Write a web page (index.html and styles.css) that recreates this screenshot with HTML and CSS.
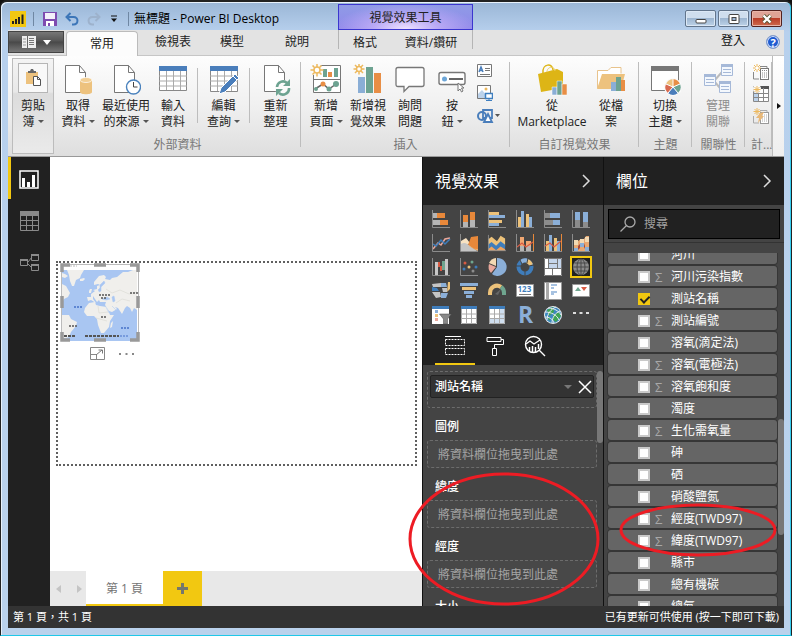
FILE: index.html
```html
<!DOCTYPE html>
<html lang="zh-Hant">
<head>
<meta charset="utf-8">
<title>無標題 - Power BI Desktop</title>
<link rel="stylesheet" href="styles.css">
</head>
<body>
<div class="window">
  <header class="titlebar">
    <div class="title-left">
      <svg class="logo" width="16" height="16" viewBox="0 0 16 16"><rect width="16" height="16" fill="#f2c811"/><path d="M3 13v-3M6 13V8M9 13V6M12.500 13V3.500" stroke="#222" stroke-width="2"/></svg>
      <span class="title-sep"></span>
      <button class="quick" aria-label="儲存"><svg width="14" height="14" viewBox="0 0 14 14"><path d="M0 0h14v14H0z" fill="#7e4bb0"/><path d="M2 1h10v6H2z" fill="#f4effa"/><path d="M3 9h8v5H3z" fill="#fff"/><path d="M5 11h2v3H5z" fill="#7e4bb0"/></svg></button>
      <button class="quick" aria-label="復原"><svg width="14" height="14" viewBox="0 0 14 14"><path d="M5.500 1 1.500 5l4 4M2 5h6.500c5.500 0 5 7.500 0 7.500H7" fill="none" stroke="#3d76b8" stroke-width="2"/></svg></button>
      <button class="quick" aria-label="重做"><svg width="14" height="14" viewBox="0 0 14 14"><path d="M8.500 1l4 4-4 4M12 5H5.500C0 5 .5 12.500 5.500 12.500H7" fill="none" stroke="#9db2cc" stroke-width="2"/></svg></button>
      <button class="quick quick-more" aria-label="自訂"><svg width="8" height="8" viewBox="0 0 8 8"><path d="M1 1h6" stroke="#111"/><path d="M1 3.500h6L4 7z" fill="#111"/></svg></button>
      <span class="title-sep"></span>
      <h1 class="title">無標題 - Power BI Desktop</h1>
    </div>
    <div class="context-title">視覺效果工具</div>
    <div class="window-buttons">
      <button class="win-btn" aria-label="最小化"><svg width="12" height="10" viewBox="0 0 12 10"><rect x="1" y="5.500" width="10" height="3.500" rx="1" fill="#fff" stroke="#444"/></svg></button>
      <button class="win-btn" aria-label="最大化"><svg width="12" height="10" viewBox="0 0 12 10"><rect x="1" y=".5" width="10" height="9" rx="1" fill="#fff" stroke="#444"/><rect x="4" y="3.500" width="4" height="3" fill="#9cb7d6" stroke="#444"/></svg></button>
      <button class="win-btn win-close" aria-label="關閉"><svg width="12" height="10" viewBox="0 0 12 10"><path d="M2.500 1.500l7 7M9.500 1.500l-7 7" stroke="#553" stroke-width="4"/><path d="M2.500 1.500l7 7M9.500 1.500l-7 7" stroke="#fff" stroke-width="2.400"/></svg></button>
    </div>
  </header>

  <nav class="tabs">
    <button class="file-btn" aria-label="檔案"><svg width="14" height="12" viewBox="0 0 14 12"><rect width="14" height="12" fill="#eee"/><path d="M5.500 0v12" stroke="#666"/><path d="M1 3h3M1 6h3M1 9h3" stroke="#999"/><path d="M7 2.500h5M7 4.500h5M7 6.500h5M7 8.500h5" stroke="#777"/></svg><svg width="8" height="5" viewBox="0 0 8 5"><path d="M0 0h8L4 5z" fill="#fff"/></svg></button>
    <button class="tab tab-active">常用</button>
    <button class="tab tab-wide">檢視表</button>
    <button class="tab">模型</button>
    <button class="tab tab-help">說明</button>
    <div class="context-tabs"><button class="tab tab-format">格式</button><button class="tab tab-drill">資料/鑽研</button></div>
    <button class="signin">登入</button>
    <button class="help" aria-label="說明">?</button>
  </nav>

  <section class="ribbon">
    <div class="clip-group">
      <button class="rb">
        <span class="clip-icon"><svg width="16" height="18" viewBox="0 0 16 18"><path d="M1 3h12v12H1z" fill="#edc27e"/><path d="M3 2h2l1-2h2l1 2h2v2H3z" fill="#666"/><path d="M8.500 7.500h4l3 3v6h-7z" fill="#fff" stroke="#555"/><path d="M12.500 7.500v3h3" fill="none" stroke="#555"/></svg></span>
        <span>剪貼<br>簿<i class="caret"></i></span></button>
    </div>
    <div class="group g-data">
      <div class="row">
        <button class="rb w48"><svg width="30" height="32" viewBox="0 0 30 32"><path d="M2.500 1.500h14l6 7v20h-20z" fill="#fff" stroke="#777"/><path d="M16.500 1.500v7h6" fill="none" stroke="#777"/><path d="M17 16v12c0 3 12 3 12 0V16" fill="#edc27e"/><ellipse cx="23" cy="16" rx="6" ry="2.500" fill="#f2cf95" stroke="#fff" stroke-width=".7"/></svg><span>取得<br>資料<i class="caret"></i></span></button>
        <button class="rb w48"><svg width="30" height="32" viewBox="0 0 30 32"><path d="M3.500 1.500h14l6 7v20h-20z" fill="#fff" stroke="#777"/><path d="M17.500 1.500v7h6" fill="none" stroke="#777"/><circle cx="22.500" cy="23" r="7" fill="#fff" stroke="#4a82bd" stroke-width="1.400"/><path d="M22.500 18v5h4" fill="none" stroke="#444"/></svg><span>最近使用<br>的來源<i class="caret"></i></span></button>
        <button class="rb w46"><svg width="28" height="32" viewBox="0 0 28 32"><path d="M.5 2.500h27v24H.5z" fill="#fff" stroke="#888"/><path d="M0 2h28v5H0z" fill="#4a7ebb"/><path d="M0 12h28M0 17h28M0 22h28M7.500 7v19M14.500 7v19M21.500 7v19" stroke="#aaa"/></svg><span>輸入<br>資料</span></button>
        <span class="mini-sep"></span>
        <button class="rb w49"><svg width="30" height="32" viewBox="0 0 30 32"><path d="M1.500 2.500h27v25h-27z" fill="#fff" stroke="#888"/><path d="M1 2h28v5H1z" fill="#4a7ebb"/><path d="M1 12h28M1 17h28M1 22h28M8.500 7v20M15.500 7v20M22.500 7v20" stroke="#aaa"/><path d="M10 30l2-6L26 10l4 4-14 14z" fill="#4a7ebb" stroke="#fff"/><path d="M24 12l4 4" stroke="#fff"/></svg><span>編輯<br>查詢<i class="caret"></i></span></button>
        <span class="mini-sep"></span>
        <button class="rb w49"><svg width="30" height="32" viewBox="0 0 30 32"><path d="M3.500 1.500h14l6 7v19h-20z" fill="#fff" stroke="#777"/><path d="M17.500 1.500v7h6" fill="none" stroke="#777"/><circle cx="22" cy="24" r="8" fill="#fafafa"/><path d="M16 23a6 6 0 0 1 10-4M28 24a6 6 0 0 1-10 5" fill="none" stroke="#6da391" stroke-width="2.600"/><path d="M29 15v7h-7zM15 32v-7h7z" fill="#6da391"/></svg><span>重新<br>整理</span></button>
      </div>
      <div class="group-label">外部資料</div>
    </div>
    <div class="group g-insert">
      <div class="row">
        <button class="rb w42"><svg width="32" height="32" viewBox="0 0 32 32"><path d="M3.500 1.500h27v27h-27z" fill="#fff" stroke="#777"/><path d="M3 15.500h28" stroke="#777"/><path d="M13 5h4v8h-4zM24 4h4v9h-4z" fill="#6da391"/><path d="M18 8h4v5h-4z" fill="#e88e45"/><path d="M5 25l8-5 6 5 7-5" fill="none" stroke="#666" stroke-width="1.500"/><circle cx="13" cy="20" r="2.500" fill="#e88e45"/><circle cx="6" cy="25" r="2" fill="#6da391"/><circle cx="19" cy="25" r="2.500" fill="#6da391"/><circle cx="26" cy="20" r="3" fill="#6da391"/><circle cx="7" cy="6" r="6" fill="#fafafa"/><path d="M7-.5v13M.5 6h13M2.500 1.500l9 9M11.500 1.500l-9 9" stroke="#edb95e" stroke-width="1.500"/><circle cx="7" cy="6" r="3" fill="#fff" stroke="#edb95e" stroke-width="1.500"/></svg><span>新增<br>頁面<i class="caret"></i></span></button>
        <button class="rb w42"><svg width="32" height="32" viewBox="0 0 32 32"><path d="M6 13h7v16H6z" fill="#8aaed6"/><path d="M14 3h7v26h-7z" fill="#6da391"/><path d="M22 9h7v20h-7z" fill="#e88e45"/><path d="M7-.5v11M1.500 5h11M3 1l8 8M11 1l-8 8" stroke="#edb95e" stroke-width="1.500"/><circle cx="7" cy="5" r="2.500" fill="#fff" stroke="#edb95e" stroke-width="1.500"/></svg><span>新增視<br>覺效果</span></button>
        <button class="rb w42"><svg width="30" height="32" viewBox="0 0 30 32"><path d="M3 3.500h24q2 0 2 2v15q0 2-2 2H14l-5 5v-5H3q-2 0-2-2v-15q0-2 2-2z" fill="#fff" stroke="#777" stroke-width="1.300"/></svg><span>詢問<br>問題</span></button>
        <button class="rb w42"><svg width="30" height="32" viewBox="0 0 30 32"><rect x="2" y="8.500" width="26" height="12" rx="2" fill="#fff" stroke="#777" stroke-width="1.400"/><circle cx="7.500" cy="15" r="2.500" fill="#6ca6d8"/><path d="M12 15h14" stroke="#666" stroke-width="2"/><path d="M21 19v8l2-2 1.500 3 1.500-1-1.500-3H27z" fill="#fff" stroke="#777"/></svg><span>按<br>鈕<i class="caret"></i></span></button>
        <div class="small-icons">
          <button aria-label="文字方塊"><svg width="16" height="14" viewBox="0 0 16 14"><path d="M.5.5h14v12H.5z" fill="#fff" stroke="#777"/><path d="M2 8l2-5 2 5M3 6.500h3" fill="none" stroke="#4a7ebb" stroke-width="1.500"/><path d="M8 4.500h5M8 6.500h5M3 10.500h10" stroke="#777"/></svg></button>
          <button aria-label="影像"><svg width="16" height="16" viewBox="0 0 16 16"><path d="M.5.5h13v13H.5z" fill="#fff" stroke="#777"/><path d="M1 13V9l4-4 4 5v3z" fill="#bcd2ea"/><circle cx="9" cy="4" r="1.500" fill="#edb95e"/><path d="M8.500 8.500h7v5h-7z" fill="#fff" stroke="#3f7fc0" stroke-width="1.500"/><path d="M9 15.500h6M12 13v3" stroke="#3f7fc0"/></svg></button>
          <button aria-label="圖形"><svg width="24" height="16" viewBox="0 0 24 16"><circle cx="5" cy="8" r="4" fill="none" stroke="#4a7ebb" stroke-width="2"/><path d="M6 2h9v8H6z" fill="none" stroke="#4a7ebb" stroke-width="1.800"/><path d="M11 6l4 8H7z" fill="#fff" stroke="#4a7ebb" stroke-width="1.800"/><path d="M18 6h5l-2.500 3z" fill="#555"/></svg></button>
        </div>
      </div>
      <div class="group-label">插入</div>
    </div>
    <div class="group g-custom">
      <div class="row">
        <button class="rb w84"><svg width="30" height="32" viewBox="0 0 30 32"><path d="M1 10L20 5l6 3v16L4 28z" fill="#ddb516"/><path d="M6 9C5-1 16-1 16 6" fill="none" stroke="#ddb516" stroke-width="1.500"/><path d="M10 8c0-6 8-6 8-1" fill="none" stroke="#edcf65"/><path d="M15 23h5v8h-5z" fill="#8aaed6" stroke="#fff" stroke-width=".5"/><path d="M20 17h5v14h-5z" fill="#6da391" stroke="#fff" stroke-width=".5"/><path d="M25 20h5v11h-5z" fill="#e88e45" stroke="#fff" stroke-width=".5"/></svg><span>從<br>Marketplace</span></button>
        <button class="rb w34"><svg width="30" height="32" viewBox="0 0 30 32"><path d="M1.500 24V6.500H12l3-3h10v6" fill="#fff" stroke="#e8c38c"/><path d="M1 25L6 10h23l-4 15z" fill="#edc27e"/><path d="M15 18h5v9h-5z" fill="#8aaed6"/><path d="M20 13h5v14h-5z" fill="#6da391"/><path d="M25 16h4v11h-4z" fill="#e88e45"/></svg><span>從檔<br>案</span></button>
      </div>
      <div class="group-label">自訂視覺效果</div>
    </div>
    <div class="group g-theme">
      <div class="row">
        <button class="rb w52"><svg width="32" height="32" viewBox="0 0 32 32"><path d="M2.500 2.500h27v24h-27z" fill="#fff" stroke="#777"/><path d="M2 2h28v5H2z" fill="#777"/><circle cx="24" cy="23" r="9" fill="#fafafa"/><path d="M24 23V15a8 8 0 0 1 7 5z" fill="#e88e45"/><path d="M24 23l7-3a8 8 0 0 1-2 9z" fill="#6da391"/><path d="M24 23l5 6a8 8 0 0 1-10 0z" fill="#4a7ebb"/><path d="M24 23l-5 6a8 8 0 0 1-2-9z" fill="#d96b50"/><path d="M24 23l-7-3a8 8 0 0 1 7-5z" fill="#edc27e"/><path d="M24 23v-8M24 23l7-3M24 23l5 6M24 23l-5 6M24 23l-7-3" stroke="#fff"/></svg><span>切換<br>主題<i class="caret"></i></span></button>
      </div>
      <div class="group-label">主題</div>
    </div>
    <div class="group g-rel">
      <div class="row">
        <button class="rb w52 off"><svg width="30" height="32" viewBox="0 0 30 32"><path d="M11 17l8-9M11 17l6 7" stroke="#bbb" stroke-width="2"/><g fill="#f4f8fd" stroke="#a6b9d8"><path d="M1.500 10.500h11v11h-11zM18.500.5h11v11h-11zM16.500 17.500h11v11h-11z"/><path d="M3 15.500h8M3 18.500h8M20 5.500h8M20 8.500h8M18 22.500h8M18 25.500h8"/></g><path d="M1 10h12v3H1zM18 0h12v3H18zM16 17h12v3H16z" fill="#a6b9d8"/></svg><span>管理<br>關聯</span></button>
      </div>
      <div class="group-label">關聯性</div>
    </div>
    <div class="group g-calc">
      <div class="small-icons">
        <button aria-label="新增量值"><svg width="16" height="16" viewBox="0 0 16 16"><path d="M.5 8v7H6M7 2.500h7v3" fill="none" stroke="#888"/><rect x="7.500" y="4.500" width="8" height="11" fill="#fff" stroke="#777"/><path d="M9 6.500h5M9 9h5M9 11h5M9 13h5" stroke="#888" stroke-dasharray="1 1"/><path d="M4 0v8M0 4h8M1 1l6 6M7 1L1 7" stroke="#edb95e"/><circle cx="4" cy="4" r="1.500" fill="#fff"/></svg></button>
        <button aria-label="新增資料行"><svg width="16" height="16" viewBox="0 0 16 16"><path d="M.5.5h15v15H.5z" fill="#fff" stroke="#888"/><path d="M1 6h4v9H1z" fill="#bcd2ea"/><path d="M6 0h10v3H6z" fill="#555"/><path d="M0 7.500h16M0 11.500h16M5.500 2v14M10.500 2v14" stroke="#888"/><circle cx="4" cy="3" r="4" fill="#fafafa"/><path d="M4 0v7M.5 3.500h7M1.500 1l5 5M6.500 1l-5 5" stroke="#edb95e"/></svg></button>
        <button aria-label="快速量值"><svg width="16" height="16" viewBox="0 0 16 16"><path d="M.5 8v7H6M7 2.500h7v3" fill="none" stroke="#aaa"/><rect x="7.500" y="4.500" width="8" height="11" fill="#fff" stroke="#999"/><path d="M9 7h5M9 9h5M9 11h5M9 13h5" stroke="#aaa" stroke-dasharray="1 1"/><path d="M7 5l4-1-2 4h2l-6 7 1-5H3z" fill="#e8b878"/><path d="M4 0v7M.5 3.500h7M1.500 1l5 5M6.500 1l-5 5" stroke="#edb95e"/></svg></button>
      </div>
      <div class="group-label">計...</div>
    </div>
    <button class="ribbon-more" aria-label="更多"><svg width="4" height="6" viewBox="0 0 4 6"><path d="M0 0v6l4-3z" fill="#111"/></svg></button>
  </section>

  <main class="body">
    <nav class="rail">
      <button class="rail-btn rail-active" aria-label="報表"><svg width="20" height="20" viewBox="0 0 20 20"><path d="M1 2h18v17H1z" fill="none" stroke="#fff" stroke-width="1.500"/><path d="M4.500 18V9M9.500 18v-5M14.500 18V6" stroke="#fff" stroke-width="3"/></svg></button>
      <button class="rail-btn" aria-label="資料"><svg width="20" height="20" viewBox="0 0 20 20"><path d="M.5.5h18v19H.5zM0 9.500h19M0 14.500h19M6.500 5v15M12.500 5v15" fill="none" stroke="#8a8a8a"/><path d="M0 0h19v5H0z" fill="#8a8a8a"/></svg></button>
      <button class="rail-btn" aria-label="模型"><svg width="20" height="20" viewBox="0 0 20 20"><path d="M8 9l4-5M8 11l4 4M.5 6.500h7v6h-7zM11.500 1.500h7v6h-7zM11.500 11.500h7v6h-7z" fill="none" stroke="#8a8a8a"/><path d="M0 6h8v2H0zM11 1h8v2h-8zM11 11h8v2h-8z" fill="#8a8a8a"/></svg></button>
    </nav>

    <section class="canvas">
      <div class="page-area">
        <div class="page">
          <svg class="map" width="80" height="80" viewBox="0 0 80 80">
            <rect x="1.500" y="1.500" width="77" height="76" fill="#fff" stroke="#bbb"/>
            <rect x="2" y="7" width="75" height="71" fill="#a9c6f2"/>
            <g fill="#f0efec">
              <path d="M7 7h17l-3 5-1 3-4 2-2 6h-2l-2-5-1-6zM2 10l3 1 3 2-3 2-3-1zM2 21l4 2 4 7-2 4-4 2-2 4zM20 16l4-1 1 1-2 2h-3z"/>
              <path d="M28 38l-1-4 4 0 0-3 4-3-2-1 4-1 0-3 3-1-2-1-4 1v-3l5-6 5-1 2 2-1 2 5 1 2-2 5-1 6-5h5l5-2h4v40l-3-2-2 4-2-4-3-2-2 2-3 6-4-6-3-1 2 2-5 3-3-1-4-6 1-3-6 0-1-2-2 2-4-6 0 3 3 4-5-3-3 1-2 3z"/>
              <path d="M25 45l4-5 6-1 1 3 4 1 7 1 3 8 4 0-4 6-1 6-5 6h-3l-3-8-1-6-3-3-7 0-3-4zM51 60l2-2-1 6-2 1z"/>
              <path d="M2 52h7l2 4 6 3-1 4-5 6-2 5-3 1H2zM29 30l2 0 1-4-2 0-1 2z"/>
            </g>
            <path d="M39 29l2-1 0-4 4-4-1-2-4 4 0 3-2 2M42 36l5-2 3 2-4 1zM52 34l2-1 1 5-2 1zM46 44l3 6M52 43l4 4" fill="#a9c6f2" stroke="#a9c6f2" stroke-width=".5"/>
            <path d="M46 26l6 4 8-3 9 4 8-2M56 40l6-4 8 2M38 43l1 7 9-1M36 55l11 3" fill="none" stroke="#d8d8d2" stroke-width=".6"/>
            <path d="M39 32h11M41 35h6M70 30h8M41 54h5M9 63h8" stroke="#555" stroke-width="1.500" stroke-dasharray="2 1"/>
            <path d="M14 44h9M61 65h8" stroke="#4671c8" stroke-width="1.500" stroke-dasharray="2 1"/>
            <path d="M4 73h12M25 73h34" stroke="#555" stroke-width="2" stroke-dasharray="3 1"/><path d="M60 73h9" stroke="#4671c8" stroke-dasharray="2 1"/>
            <path d="M10 3h7" stroke="#bbb" stroke-dasharray="2 1"/>
            <path d="M2 9V2h8M34 2h12M70 2h8v7M2 33v12M78 33v12M2 69v8h8M34 77h12M70 77h8v-8" fill="none" stroke="#999" stroke-width="3.500"/>
          </svg>
          <div class="visual-tools">
            <button aria-label="焦點模式"><svg width="16" height="14" viewBox="0 0 16 14"><path d="M.5.5h14v12H.5zM.5 7.500h6v5" fill="none" stroke="#888"/><path d="M6 8l6-5M8.500 3h4v3.500" fill="none" stroke="#777"/></svg></button>
            <button aria-label="更多選項"><svg width="16" height="4" viewBox="0 0 16 4"><path d="M1 2h2M7.500 2h2M14 2h2" stroke="#888" stroke-width="2"/></svg></button>
          </div>
        </div>
      </div>
      <div class="pages">
        <div class="page-nav"><button aria-label="上一頁"><svg width="5" height="8" viewBox="0 0 5 8"><path d="M5 0v8L0 4z" fill="#c4c4c4"/></svg></button><button aria-label="下一頁"><svg width="5" height="8" viewBox="0 0 5 8"><path d="M0 0v8l5-4z" fill="#c4c4c4"/></svg></button></div>
        <button class="page-tab">第 1 頁</button>
        <button class="page-add" aria-label="新增頁面"><svg width="11" height="11" viewBox="0 0 11 11"><path d="M5.500 0v11M0 5.500h11" stroke="#75776c" stroke-width="3"/></svg></button>
      </div>
    </section>

    <section class="pane viz">
      <div class="pane-head"><h2>視覺效果</h2><button aria-label="摺疊"><svg width="9" height="14" viewBox="0 0 9 14"><path d="M1 1l6 6-6 6" fill="none" stroke="#ddd" stroke-width="1.500"/></svg></button></div>
      <div class="viz-grid">
        <button aria-label="堆疊橫條圖"><svg viewBox="0 0 18 18"><path d="M1 3h4v5H1zM1 10h7v5H1z" fill="#b5b5b5"/><path d="M5 3h8v5H5zM8 10h8v5H8z" fill="#e8883a"/><path class="ax" d="M.5 0v17.500H18"/></svg></button>
        <button aria-label="堆疊直條圖"><svg viewBox="0 0 18 18"><path d="M3 5h5v7H3zM10 2h5v8h-5z" fill="#e8883a"/><path d="M3 12h5v5H3zM10 10h5v7h-5z" fill="#b5b5b5"/><path class="ax" d="M.5 0v17.500H18"/></svg></button>
        <button aria-label="群組橫條圖"><svg viewBox="0 0 18 18"><path d="M1 2h10v3H1zM1 10h13v3H1z" fill="#edc27a"/><path d="M1 5h16v3H1zM1 13h10v3H1z" fill="#8bafd8"/><path class="ax" d="M.5 0v17.500H18"/></svg></button>
        <button aria-label="群組直條圖"><svg viewBox="0 0 18 18"><path d="M2 7h3v10H2zM10 4h3v13h-3z" fill="#edc27a"/><path d="M5 1h3v16H5zM13 7h3v10h-3z" fill="#8bafd8"/><path class="ax" d="M.5 0v17.500H18"/></svg></button>
        <button aria-label="百分比橫條圖"><svg viewBox="0 0 18 18"><path d="M1 3h5v5H1zM1 10h8v5H1z" fill="#8c8c8c"/><path d="M6 3h10v5H6zM9 10h7v5H9z" fill="#8bafd8"/><path class="ax" d="M.5 0v17.500H18"/></svg></button>
        <button aria-label="百分比直條圖"><svg viewBox="0 0 18 18"><path d="M3 10h5v7H3zM11 12h5v5h-5z" fill="#8c8c8c"/><path d="M3 2h5v8H3zM11 2h5v10h-5z" fill="#8bafd8"/><path class="ax" d="M.5 0v17.500H18"/></svg></button>

        <button aria-label="折線圖"><svg viewBox="0 0 18 18"><path d="M1 15l5-6 3 2 4-6 5-1" fill="none" stroke="#e9a79b" stroke-width="1.500"/><path d="M1 10l3 2 5-6 4 4 5-5" fill="none" stroke="#3f7dbb" stroke-width="1.500"/><path class="ax" d="M.5 0v17.500H18"/></svg></button>
        <button aria-label="區域圖"><svg viewBox="0 0 18 18"><path d="M1 7l5-3 4 5-3 2H1z" fill="#f7e2c2"/><path d="M8 11l3-8 7-1v14H8z" fill="#e8883a"/><path d="M1 10c6-4 9 4 17 7H1z" fill="#c5c5c5"/><path d="M8 11c3 3 6 4 10 4v2z" fill="#f0b06c"/><path class="ax" d="M.5 0v17.500H18"/></svg></button>
        <button aria-label="堆疊區域圖"><svg viewBox="0 0 20 18"><path d="M0 5l4-3 6 5 4-6 5 3v9H0z" fill="#edc27a"/><path d="M0 11l4-3 5 4 5-5 5 4v7H0z" fill="#3f7dbb"/><path d="M0 16l4-3 5 4 5-4 5 3v2H0z" fill="#eda35f"/><path class="ax" d="M.5 0v17.500H20"/></svg></button>
        <button aria-label="折線與堆疊直條圖"><svg viewBox="0 0 18 18"><path d="M4 3h4v9H4zM10 7h5v5h-5z" fill="#f0a772"/><path d="M4 12h4v5H4zM10 12h5v5h-5z" fill="#b5b5b5"/><path d="M1 13l5-4 4 4 7-5" fill="none" stroke="#d95b43" stroke-width="1.200"/><path class="ax" d="M.5 0v17.500H18"/><path d="M17.500 0v17" stroke="#e8883a"/></svg></button>
        <button aria-label="折線與群組直條圖"><svg viewBox="0 0 18 18"><path d="M2 7h3v10H2zM10 4h3v13h-3z" fill="#edc27a"/><path d="M5 1h3v16H5zM13 7h3v10h-3z" fill="#8bafd8"/><path d="M1 12l5-3 4 4 7-6" fill="none" stroke="#d95b43" stroke-width="1.200"/><path class="ax" d="M.5 0v17.500H18"/><path d="M17.500 0v17" stroke="#e8883a"/></svg></button>
        <button aria-label="功能區圖"><svg viewBox="0 0 18 18"><path d="M2 7h4l3-2h3l2-3h3v15H2z" fill="#e8a872"/><path d="M2 6h4v5H2zM8 5h4v4H8zM13 3h4v5h-4z" fill="#f2d9b3"/><path d="M2 14h4v3H2zM8 9h4v4H8zM13 13h4v4h-4z" fill="#8bafd8"/><path d="M6 12l2-2v4l-2 2zM12 9l1 3v3l-1-2z" fill="#a5483d"/><path class="ax" d="M.5 0v17.500H18"/></svg></button>

        <button aria-label="瀑布圖"><svg viewBox="0 0 18 18"><path d="M3 4h3v13H3zM13 1h3v16h-3z" fill="#c8c8c8"/><path d="M6 4h2v5H6zM8 8h2v5H8z" fill="#d95b43"/><path d="M10 3h3v9h-3z" fill="#6fa58f"/><path class="ax" d="M.5 0v17.500H18"/></svg></button>
        <button aria-label="散佈圖"><svg viewBox="0 0 18 18"><circle cx="5" cy="5" r="1.500" fill="#d95b43"/><circle cx="4" cy="11" r="1.500" fill="#3f7dbb"/><circle cx="12" cy="4" r="1.500" fill="#6fa58f"/><circle cx="9" cy="9" r="1.500" fill="#edc27a"/><circle cx="16" cy="9" r="1.500" fill="#3f7dbb"/><circle cx="13" cy="13" r="1.500" fill="#8c8c8c"/><path class="ax" d="M.5 0v17.500H18"/></svg></button>
        <button aria-label="圓形圖"><svg viewBox="0 0 18 18"><path d="M9 9V0a9 9 0 1 1-5 16z" fill="#8bafd8"/><path d="M8 8V0a9 9 0 0 0-7 5z" fill="#f2d9b3"/><path d="M8 9L3 15a9 9 0 0 1-2-9z" fill="#e9a79b"/></svg></button>
        <button aria-label="環圈圖"><svg viewBox="0 0 18 18"><circle cx="9" cy="9" r="6.500" fill="none" stroke="#3f7dbb" stroke-width="4"/><path d="M5 4a6.500 6.500 0 0 1 6-1.500" fill="none" stroke="#8bafd8" stroke-width="4"/><path d="M11 3a6.500 6.500 0 0 1 4 4" fill="none" stroke="#edc27a" stroke-width="4"/><path d="M3 0l3 6M12 0l-1 5M18 7l-5 1M0 8h5M9 18v-5" stroke="#444"/></svg></button>
        <button aria-label="樹狀圖"><svg viewBox="0 0 18 18"><path d="M0 0h18v18H0z" fill="#fff"/><path d="M5 1h12v9H5z" fill="#c5d6ec"/><path d="M.5.500h17v17H.5zM0 10.500h18M4.500 0v10M13.500 0v10M5 5.500h9M8.500 11v7" fill="none" stroke="#777"/></svg></button>
        <button class="picked" aria-label="地圖"><svg viewBox="0 0 18 18"><circle cx="9" cy="9" r="8" fill="#8c8c8c"/><ellipse cx="9" cy="9" rx="4" ry="8" class="gl"/><path class="gl" d="M9 1v16M1 9h16M2.500 5h13M2.500 13h13"/></svg></button>

        <button aria-label="區域分布圖"><svg viewBox="0 0 18 18"><path d="M0 2l9-1v4H1zM0 10h8l1 5-5 1zM10 6h5v4h-4z" fill="#c5c5c5"/><path d="M9 1h5l1 4H9zM9 11h7l-2 5-5 0z" fill="#8bafd8"/><path d="M0 5l5 1 2 3H0z" fill="#3f7dbb"/><path d="M16 0h2v7l-3 3z" fill="#edc27a"/></svg></button>
        <button aria-label="漏斗圖"><svg viewBox="0 0 18 18"><path d="M0 1h18v3H0zM4 9h10v3H4zM6 13h6v3H6z" fill="#8bafd8"/><path d="M2 5h14v3H2z" fill="#edc27a"/></svg></button>
        <button aria-label="量測計"><svg viewBox="0 0 18 18"><path d="M2 13v-2a7 7 0 0 1 11-6" fill="none" stroke="#edc27a" stroke-width="4"/><path d="M13 5a7 7 0 0 1 3 6v2" fill="none" stroke="#6fa58f" stroke-width="4"/><path d="M7 12l6-5-3 6z" fill="#666"/></svg></button>
        <button aria-label="卡片"><svg viewBox="0 0 18 18"><path d="M.5 2.500h17v12H.5z" fill="#fff" stroke="#999"/><text x="1.500" y="10" font-size="8" font-weight="bold" fill="#3f7dbb">123</text><path d="M3 12.500h12" stroke="#777"/></svg></button>
        <button aria-label="多列卡片"><svg viewBox="0 0 18 18"><path d="M.5.500h17v17H.5z" fill="#fff" stroke="#999"/><path d="M3.500 1v16" stroke="#aaa" stroke-width="3"/><path d="M7 3h6M7 6h3M7 10h6M7 12h3" stroke="#8bafd8" stroke-width="1.500"/></svg></button>
        <button aria-label="KPI"><svg viewBox="0 0 18 18"><path d="M.5 2.500h17v12H.5z" fill="#fff" stroke="#999"/><path d="M3 9l3-4 3 4z" fill="#6fa58f"/><path d="M9 5h6l-3 4z" fill="#d95b43"/></svg></button>

        <button aria-label="交叉分析篩選器"><svg viewBox="0 0 18 18"><path d="M0 0h17v18H0z" fill="#fff"/><path d="M0 0h17v3H0z" fill="#3f7dbb"/><path d="M3 4h3v3H3z" fill="#8bafd8"/><path d="M3 8h3v3H3z" fill="#edc27a"/><path d="M3 12h3v3H3z" fill="#e9a79b"/><path d="M7.500 8h12l-4 5v5h-4v-5z" fill="#888" stroke="#444" stroke-width=".5"/></svg></button>
        <button aria-label="資料表"><svg viewBox="0 0 18 18"><path d="M1 0h16v18H1z" fill="#fff"/><path d="M1 0h16v3H1z" fill="#3f7dbb"/><path d="M1.500 3v14.500h15V3M1 8h16M1 12.500h16M6.500 3v15M11.500 3v15" fill="none" stroke="#aaa"/></svg></button>
        <button aria-label="矩陣"><svg viewBox="0 0 18 18"><path d="M1 0h16v18H1z" fill="#fff"/><path d="M12 3h5v15h-5zM1 13h16v5H1z" fill="#cfdeef"/><path d="M1 0h16v3H1z" fill="#3f7dbb"/><path d="M1.500 3v14.500h15V3M1 8h16M1 12.500h16M6.500 3v15M11.500 3v15" fill="none" stroke="#aaa"/></svg></button>
        <button aria-label="R 指令碼"><svg viewBox="0 0 18 18"><text x="2" y="17" font-size="23" font-weight="bold" fill="#8bafd8">R</text></svg></button>
        <button aria-label="ArcGIS 地圖"><svg viewBox="0 0 18 18"><circle cx="9" cy="9" r="9" fill="#e8eef0"/><circle cx="9" cy="9" r="8" fill="#3d88c0"/><path d="M3 4l6-3 1 5-5 4zM9 9l6-3 2 4-5 6-3-2zM2 10l4 2 0 3z" fill="#3fa355"/><path d="M1 6c6 0 12 3 14 8M4 2c6 0 11 3 13 7M1 11c4 0 8 2 9 6M3 14C3 8 7 3 12 1M8 17c0-5 3-10 8-12" fill="none" stroke="#e8eef0"/></svg></button>
        <button aria-label="更多"><svg viewBox="0 0 18 18"><path d="M1 7h3M7.500 7h3M14 7h3" stroke="#ddd" stroke-width="2"/></svg></button>
      </div>
      <div class="viz-tabs">
        <button class="viz-tab viz-tab-on" aria-label="欄位"><svg width="20" height="20" viewBox="0 0 20 20"><path d="M0 .5h16" stroke="#fff"/><path d="M.5 3.500h19v6H.5zM.5 12.500h19v6H.5z" fill="none" stroke="#fff" stroke-dasharray="2 1"/></svg></button>
        <button class="viz-tab" aria-label="格式"><svg width="20" height="20" viewBox="0 0 20 20"><path d="M2 1.500h14v4H2zM16 3.500h2.500v5H9.500v4M7.500 12.500h4v7h-4z" fill="none" stroke="#fff"/></svg></button>
        <button class="viz-tab" aria-label="分析"><svg width="22" height="22" viewBox="0 0 22 22"><circle cx="9.500" cy="9.500" r="8" fill="none" stroke="#fff" stroke-width="1.400"/><path d="M2 9l4-3 4 3 6-4M15 15l6 6" fill="none" stroke="#fff" stroke-width="1.400"/><path d="M5.500 12v4M8.500 11v6M11.500 12v5M14.500 9v5" stroke="#fff" stroke-width="1.500"/></svg></button>
      </div>
      <div class="wells">
        <div class="well-list">
          <div class="well well-filled"><div class="chip"><span>測站名稱</span><button aria-label="選項"><svg width="8" height="4" viewBox="0 0 8 4"><path d="M0 0h8L4 4z" fill="#777"/></svg></button><button aria-label="移除"><svg width="14" height="14" viewBox="0 0 14 14"><path d="M1 1l12 12M13 1L1 13" stroke="#fff" stroke-width="1.500"/></svg></button></div></div>
          <h3>圖例</h3><div class="well">將資料欄位拖曳到此處</div>
          <h3>緯度</h3><div class="well">將資料欄位拖曳到此處</div>
          <h3>經度</h3><div class="well">將資料欄位拖曳到此處</div>
          <h3>大小</h3>
        </div>
        <div class="scroll scroll-wells"></div>
      </div>
      <svg class="mark mark-wells" width="192" height="134" viewBox="0 0 192 134"><ellipse cx="96" cy="67" rx="94" ry="65" fill="none" stroke="#ed1c24" stroke-width="3"/></svg>
    </section>

    <section class="pane fields">
      <div class="pane-head"><h2>欄位</h2><button aria-label="摺疊"><svg width="9" height="14" viewBox="0 0 9 14"><path d="M1 1l6 6-6 6" fill="none" stroke="#ddd" stroke-width="1.500"/></svg></button></div>
      <div class="search-wrap"><label class="search"><svg width="16" height="16" viewBox="0 0 16 16"><circle cx="10" cy="6" r="5" fill="none" stroke="#aaa" stroke-width="1.300"/><path d="M6.500 9.500L.5 15.500" stroke="#aaa" stroke-width="1.300"/></svg><input type="text" placeholder="搜尋" aria-label="搜尋"></label></div>
      <div class="field-area">
        <div class="field-list">
          <label class="field"><input type="checkbox"><i></i><span>河川</span></label>
          <label class="field"><input type="checkbox"><i>Σ</i><span>河川污染指數</span></label>
          <label class="field"><input type="checkbox" checked><i></i><span>測站名稱</span></label>
          <label class="field"><input type="checkbox"><i>Σ</i><span>測站編號</span></label>
          <label class="field"><input type="checkbox"><i></i><span>溶氧(滴定法)</span></label>
          <label class="field"><input type="checkbox"><i>Σ</i><span>溶氧(電極法)</span></label>
          <label class="field"><input type="checkbox"><i>Σ</i><span>溶氧飽和度</span></label>
          <label class="field"><input type="checkbox"><i></i><span>濁度</span></label>
          <label class="field"><input type="checkbox"><i>Σ</i><span>生化需氧量</span></label>
          <label class="field"><input type="checkbox"><i></i><span>砷</span></label>
          <label class="field"><input type="checkbox"><i></i><span>硒</span></label>
          <label class="field"><input type="checkbox"><i></i><span>硝酸鹽氮</span></label>
          <label class="field"><input type="checkbox"><i>Σ</i><span>經度(TWD97)</span></label>
          <label class="field"><input type="checkbox"><i>Σ</i><span>緯度(TWD97)</span></label>
          <label class="field"><input type="checkbox"><i></i><span>縣市</span></label>
          <label class="field"><input type="checkbox"><i></i><span>總有機碳</span></label>
          <label class="field"><input type="checkbox"><i></i><span>總氮</span></label>
        </div>
        <div class="scroll scroll-fields"></div>
      </div>
      <svg class="mark mark-fields" width="158" height="54" viewBox="0 0 158 54"><ellipse cx="79" cy="27" rx="77" ry="25" fill="none" stroke="#ed1c24" stroke-width="3"/></svg>
    </section>
  </main>

  <footer class="status"><span>第 1 頁，共 1 頁</span><a href="#">已有更新可供使用 (按一下即可下載)</a></footer>
</div>
</body>
</html>
```
FILE: styles.css
```css
* { box-sizing: border-box; }

body {
  margin: 0;
  background: #111;
  font: 12px/16px "Open Sans", "Noto Sans CJK TC", sans-serif;
  color: #222;
}

button {
  margin: 0;
  padding: 0;
  border: 0;
  background: none;
  color: inherit;
  font: inherit;
}

svg { display: block; flex: none; }
h1, h2, h3 { margin: 0; font-weight: 400; }

.window {
  display: flex;
  flex-direction: column;
  height: 100vh;
  border: 1px solid #222;
  border-top: 2px solid #222;
  border-bottom-color: #1fc8e8;
  border-radius: 7px 7px 0 0;
  padding: 0 7px 7px;
  background: linear-gradient(#9ab6d6, #b7d0ed 30px, #bad2ec);
  box-shadow: inset 1px 1px #e8f2fc, inset -1px 0 #35cdf0;
}

/* title bar */
.titlebar { display: flex; flex: none; height: 28px; }
.title-left { display: flex; align-items: center; flex: none; width: 330px; padding: 5px 0 0 2px; }
.title-sep { width: 1px; height: 14px; margin: 0 5px 0 7px; background: #6f87a3; }
.quick { width: 14px; margin: 0 4px; }
.quick-more { width: 8px; margin: 0 3px 0 5px; }
.title { font-size: 12px; color: #000; white-space: nowrap; }
.context-title {
  flex: none;
  width: 135px;
  margin-top: 2px;
  padding-top: 5px;
  border: 1px solid #3b36cf;
  background: radial-gradient(ellipse at 50% 100%, #efe2ff 0, #b9a9f5 35%, transparent 75%), linear-gradient(#8f9be6, #9189ea);
  color: #222;
  text-align: center;
}
.window-buttons { display: flex; gap: 2px; margin: 8px 2px 0 auto; }
.win-btn {
  display: flex;
  align-items: center;
  justify-content: center;
  width: 31px;
  height: 17px;
  border: 1px solid #62758c;
  border-radius: 2px;
  background: linear-gradient(#cfdeee 45%, #9db6d1 50%, #bdd2e8);
  box-shadow: inset 0 0 0 1px #dce8f5;
}
.win-close {
  border-color: #52211f;
  background: linear-gradient(#dfa396 45%, #ba3d28 50%, #cd6a4e);
  box-shadow: inset 0 0 0 1px #e8b4a8;
}

/* ribbon tabs */
.tabs { display: flex; flex: none; height: 26px; border-bottom: 1px solid #c6c6c6; background: #e3e3e3; }
.file-btn {
  display: flex;
  align-items: center;
  justify-content: center;
  gap: 7px;
  width: 56px;
  height: 22px;
  margin: 1px 2px 0 0;
  border: 1px solid #444;
  background: linear-gradient(#777, #555 45%, #484848 50%, #777);
}
.tab { width: 60px; padding-bottom: 1px; }
.tab-active {
  width: 72px;
  margin: 1px 0 -1px;
  border: 1px solid #bbb;
  border-bottom: 0;
  border-radius: 4px 4px 0 0;
  background: #fcfcfc;
}
.tab-wide { width: 70px; margin-right: -6px; }
.tab-help { width: 70px; margin-right: 6px; }
.context-tabs { display: flex; width: 135px; height: 19px; border: solid #b5b5b5; border-width: 0 1px; }
.context-tabs .tab { padding: 5px 0 0; }
.tab-format { width: 52px; }
.context-tabs .tab-drill { width: 80px; }
.signin { margin-left: auto; padding: 0 0 3px; color: #111; }
.help {
  width: 14px;
  height: 14px;
  margin: 5px 4px 0 21px;
  border: 1px solid #8aa0c8;
  border-radius: 50%;
  background: #1f5bd0;
  box-shadow: inset 0 0 0 1px #dce8ff;
  color: #fff;
  font-size: 11px;
  font-weight: 700;
  line-height: 11px;
}

/* ribbon */
.ribbon {
  display: flex;
  flex: none;
  height: 101px;
  padding-left: 4px;
  border-bottom: 1px solid #999;
  background: linear-gradient(#fdfdfd, #f0f0f0 50%, #dedede);
}
.clip-group { flex: none; width: 42px; margin: 2px 0; border: 1px solid #bcbcbc; background: linear-gradient(#f4f4f4, #e8e8e8 35%, #dcdcdc 37%, #eaeaea); }
.clip-group .rb { width: 40px; padding-top: 4px; gap: 5px; }
.clip-icon { display: flex; align-items: center; justify-content: center; width: 30px; height: 30px; border: 1px solid #b5b5b5; background: #f8f8f8; }
.group { position: relative; display: flex; flex-direction: column; flex: none; padding-top: 8px; }
.group::after { content: ""; position: absolute; top: 6px; right: 0; width: 1px; height: 85px; background: #bdbdbd; }
.g-data { width: 247px; }
.g-insert { width: 209px; }
.g-insert .row { padding-left: 4px; }
.g-custom { width: 129px; }
.g-theme, .g-rel { width: 53px; }
.g-calc { width: 27px; padding-left: 8px; }
.row { display: flex; }
.group-label { margin-top: auto; padding-bottom: 3px; color: #777; text-align: center; white-space: nowrap; }
.g-calc .group-label { margin-left: -2px; text-align: left; }
.rb { display: flex; flex-direction: column; align-items: center; flex: none; gap: 2px; white-space: nowrap; }
.w34 { width: 34px; }
.w42 { width: 42px; }
.w46 { width: 46px; }
.w48 { width: 48px; }
.w49 { width: 49px; }
.w52 { width: 52px; }
.w84 { width: 84px; }
.off { color: #8c8c8c; }
.caret { display: inline-block; margin: 0 0 3px 3px; border: solid transparent; border-width: 3px 3px 0; border-top-color: #555; }
.mini-sep { width: 1px; height: 55px; margin: 4px 1px 0; background: #bdbdbd; }
.small-icons { display: flex; flex-direction: column; gap: 7px; padding-left: 4px; }
.g-calc .small-icons { gap: 6px; padding: 0; }
.ribbon-more { display: flex; align-items: center; justify-content: center; flex: 1; border-left: 1px solid #bbb; background: linear-gradient(#fff, #eee); }

/* body */
.body { display: flex; flex: 1; min-height: 0; }
.rail { flex: none; width: 42px; background: #212121; }
.rail-btn { display: flex; align-items: center; width: 42px; height: 42px; padding: 2px 0 0 12px; border-left: 0 solid #f2c811; }
.rail-active { padding-left: 8px; border-left-width: 3px; }
.canvas { display: flex; flex: 1; flex-direction: column; min-width: 0; background: #fff; }
.page-area { flex: 1; padding: 104px 5px 0 6px; }
.page { aspect-ratio: 361 / 205; border: 2px dotted #606060; padding: 0 0 0 2px; }
.visual-tools { display: flex; align-items: center; gap: 12px; padding: 4px 0 0 30px; }
.pages { display: flex; height: 35px; background: #e8e8e8; }
.page-nav { display: flex; align-items: center; justify-content: space-between; width: 36px; padding: 0 4px 0 6px; }
.page-tab { width: 77px; padding-top: 2px; border: solid #f2c811; border-width: 0 0 2px; background: #fff; color: #757575; }
.page-add { display: flex; align-items: center; justify-content: center; width: 39px; background: #f2c811; }

/* side panes */
.pane { position: relative; display: flex; flex: none; flex-direction: column; width: 181px; border-left: 1px solid #111; background: #444; color: #fff; }
.pane-head { display: flex; align-items: center; justify-content: space-between; flex: none; height: 48px; padding: 0 12px; background: #212121; }
.pane-head h2 { font-size: 16px; line-height: 24px; }
.viz { z-index: 1; }
.viz-grid { display: grid; flex: none; grid-template-columns: repeat(6, 28px); grid-auto-rows: 24px; padding: 2px 4px; }
.viz-grid button { display: flex; align-items: center; justify-content: center; }
.viz-grid svg { width: 18px; height: 18px; overflow: visible; }
.viz-grid .picked { justify-self: center; align-self: center; width: 22px; height: 22px; border: 2px solid #f2c811; background: #212121; }
.ax { fill: none; stroke: #8c8c8c; }
.gl { fill: none; stroke: #4a4a4a; }
.viz-tabs { display: flex; flex: none; height: 36px; padding-left: 12px; background: #212121; }
.viz-tab { display: flex; align-items: center; justify-content: center; width: 40px; border-bottom: 2px solid transparent; }
.viz-tab-on { border-bottom-color: #f2c811; }
.wells { display: flex; flex: 1; min-height: 0; padding: 6px 0 0 4px; overflow: hidden; }
.well-list { flex: 1; }
.well { height: 28px; padding: 6px 10px; border: 1px dashed #6c6c6c; border-radius: 3px; background: #484848; color: #a5a5a5; }
.well-filled { height: 37px; padding: 3px 2px; background: none; }
.chip { display: flex; align-items: center; gap: 6px; height: 23px; padding: 0 1px 0 4px; border: 1px solid #222; border-radius: 2px; background: #333; color: #fff; font-weight: 500; }
.chip span { flex: 1; }
.wells h3 { padding: 11px 8px 5px; font-size: 12px; font-weight: 500; }
.scroll { flex: none; width: 6px; border-radius: 3px; background: #777; }
.scroll-wells { height: 72px; }

.search-wrap { flex: none; padding: 4px 4px 3px; border-bottom: 1px solid #333; }
.search { display: flex; align-items: center; gap: 8px; height: 30px; padding-left: 11px; border: 1px solid #000; background: #212121; }
.search input { flex: 1; min-width: 0; padding: 0; border: 0; outline: 0; background: none; color: #fff; font: inherit; }
.search input::placeholder { color: #a0a0a0; opacity: 1; }
.field-area { display: flex; flex: 1; min-height: 0; gap: 1px; margin-top: 10px; overflow: hidden; }
.field-list { display: flex; flex: 1; flex-direction: column; gap: 2px; margin: -9px 0 0 4px; }
.field { display: flex; align-items: center; flex: none; height: 20px; padding: 1px 0 0 30px; border-radius: 3px; background: #656565; box-shadow: 0 0 0 1px #363636; }
.field input { appearance: none; width: 12px; height: 12px; margin: 0 5px 0 0; border: 2px solid #c9c9c9; background: #fff; }
.field input:checked { border: 0; background: #f2c811; }
.field input:checked::before { content: ""; display: block; width: 4px; height: 7px; margin: 1px 0 0 4px; border: solid #222; border-width: 0 2px 2px 0; rotate: 45deg; }
.field i { width: 16px; color: #a8a8a8; font-style: normal; font-size: 13px; }
.scroll-fields { height: 116px; margin-top: 166px; }

/* annotations drawn over the panes */
.mark { position: absolute; pointer-events: none; }
.mark-wells { left: -15px; top: 315px; }
.mark-fields { left: 15px; top: 346px; }

/* status bar */
.status { display: flex; align-items: center; justify-content: space-between; flex: none; height: 22px; padding: 0 5px; background: #333; color: #fff; font-size: 11px; }
.status a { color: inherit; text-decoration: none; }
```
